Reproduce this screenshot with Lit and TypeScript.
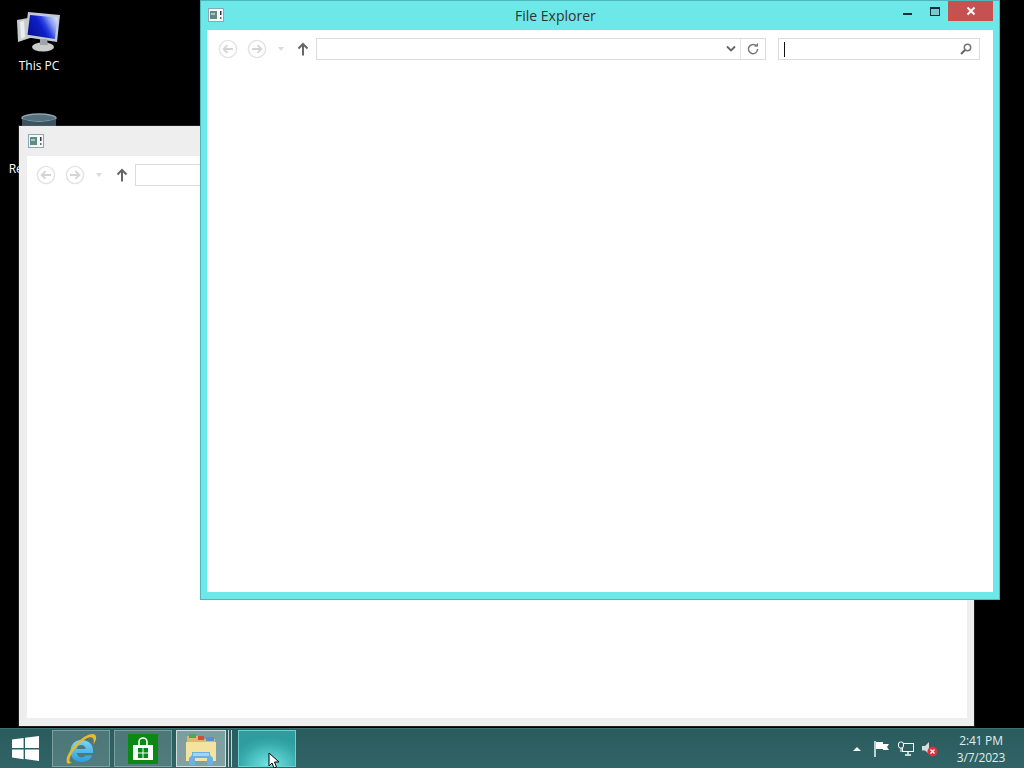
import { css, html, LitElement, svg } from "lit";
import { customElement, property } from "lit/decorators.js";

const windowIcon = html`<svg width="16" height="14" viewBox="0 0 16 14">
  <rect x="0.5" y="0.5" width="15" height="13" fill="#f4f8fa" stroke="#8fa5b5" />
  <rect x="2" y="3" width="7" height="8" fill="#5f8a80" />
  <rect x="3" y="5" width="4" height="2" fill="#a8c8c0" />
  <rect x="12" y="3" width="1.5" height="4" fill="#333" />
  <rect x="12" y="9" width="1.5" height="2" fill="#666" />
</svg>`;

const navCircle = (dir: "back" | "forward") => html`<svg width="20" height="20" viewBox="0 0 20 20">
  <circle cx="10" cy="10" r="8.6" fill="none" stroke="#e3e3e3" stroke-width="1.4" />
  ${dir === "back"
    ? svg`<path d="M15 10H6M9.5 6.2 5.6 10l3.9 3.8" fill="none" stroke="#d4d4d4" stroke-width="1.8" />`
    : svg`<path d="M5 10h9M10.5 6.2 14.4 10l-3.9 3.8" fill="none" stroke="#d4d4d4" stroke-width="1.8" />`}
</svg>`;

@customElement("file-window")
class FileWindow extends LitElement {
  @property() heading = "";
  @property({ type: Boolean }) active = false;

  static styles = css`
    :host {
      display: flex;
      flex-direction: column;
      position: absolute;
      box-sizing: border-box;
      padding: 0 7px 8px 7px;
      background: #eeeeee;
      box-shadow: 0 0 0 1px rgba(120, 120, 120, 0.25);
    }
    :host([active]) {
      background: #6ce8e8;
      box-shadow: inset 0 0 0 1px #4fb7bb;
    }
    :host(:not([active])) {
      padding-left: 8px;
    }
    :host(:not([active])) .toolbar {
      padding-left: 9px;
    }
    :host(:not([active])) .up {
      margin-left: 13px;
    }
    .titlebar {
      height: 30px;
      flex: none;
      position: relative;
      display: flex;
      align-items: center;
      padding-left: 1px;
    }
    .title {
      position: absolute;
      left: 308px;
      width: 82px;
      top: 6px;
      font: 14px/20px "Open Sans", sans-serif;
      color: #333;
      white-space: nowrap;
    }
    .controls {
      position: absolute;
      right: 0;
      top: 1px;
      display: flex;
      align-items: flex-start;
    }
    .ctl {
      width: 27px;
      height: 20px;
      display: flex;
      align-items: center;
      justify-content: center;
    }
    .close {
      width: 45px;
      height: 20px;
      background: #c75050;
      display: flex;
      align-items: center;
      justify-content: center;
    }
    .body {
      flex: 1;
      background: #fff;
    }
    .toolbar {
      display: flex;
      align-items: center;
      height: 22px;
      margin-top: 8px;
      padding-left: 11px;
    }
    .nav {
      display: flex;
      gap: 9px;
    }
    .drop {
      width: 0;
      height: 0;
      margin-left: 11px;
      border: 3.5px solid transparent;
      border-top: 4px solid #dcdcdc;
      border-bottom: 0;
    }
    .up {
      margin-left: 12px;
      width: 14px;
      height: 16px;
    }
    .address {
      margin-left: 6px;
      width: 450px;
      height: 22px;
      box-sizing: border-box;
      border: 1px solid #dcdcdc;
      display: flex;
      align-items: center;
      justify-content: flex-end;
      flex: none;
    }
    .chev {
      width: 10px;
      height: 8px;
      margin-right: 4px;
    }
    .refresh {
      width: 24px;
      height: 20px;
      border-left: 1px solid #e4e4e4;
      display: flex;
      align-items: center;
      justify-content: center;
    }
    .search {
      margin-left: 12px;
      width: 202px;
      height: 22px;
      box-sizing: border-box;
      border: 1px solid #dcdcdc;
      display: flex;
      align-items: center;
      justify-content: space-between;
      padding: 0 7px 0 5px;
      flex: none;
    }
    .caret {
      width: 1px;
      height: 15px;
      background: #111;
    }
  `;

  protected override render() {
    return html`
      <div class="titlebar">
        ${windowIcon}
        ${this.active
          ? html`<span class="title">${this.heading}</span>
              <div class="controls">
                <div class="ctl">
                  <svg width="10" height="10" viewBox="0 0 10 10"><rect y="7" width="9" height="2" fill="#10303a" /></svg>
                </div>
                <div class="ctl">
                  <svg width="10" height="9" viewBox="0 0 10 9">
                    <rect x="0.5" y="0.5" width="9" height="8" fill="#7cc8d0" stroke="#10303a" />
                    <rect width="10" height="2" fill="#10303a" />
                  </svg>
                </div>
                <div class="close">
                  <svg width="10" height="10" viewBox="0 0 10 10">
                    <path d="M1.5 1.5l7 7M8.5 1.5l-7 7" stroke="#fff" stroke-width="2" />
                  </svg>
                </div>
              </div>`
          : ""}
      </div>
      <div class="body">
        <div class="toolbar">
          <div class="nav">${navCircle("back")}${navCircle("forward")}</div>
          <div class="drop"></div>
          <svg class="up" viewBox="0 0 14 16">
            <path d="M7 14.5V3M2.5 7.5 7 3l4.5 4.5" fill="none" stroke="#666" stroke-width="2" />
          </svg>
          <div class="address">
            <svg class="chev" viewBox="0 0 10 8"><path d="M1 1.5l4 4 4-4" fill="none" stroke="#666" stroke-width="1.8" /></svg>
            <div class="refresh">
              <svg width="12" height="12" viewBox="0 0 12 12">
                <path d="M9.6 3.2A4.6 4.6 0 1 0 10.6 6" fill="none" stroke="#777" stroke-width="1.5" />
                <path d="M7 3.6h4V0z" fill="#777" />
              </svg>
            </div>
          </div>
          <div class="search">
            <div class="caret"></div>
            <svg width="12" height="12" viewBox="0 0 12 12">
              <circle cx="7.5" cy="4.5" r="3.2" fill="none" stroke="#777" stroke-width="1.5" />
              <path d="M5 7l-4 4" stroke="#666" stroke-width="2" />
            </svg>
          </div>
        </div>
      </div>
    `;
  }
}

const thisPcIcon = html`<svg width="46" height="46" viewBox="0 0 46 46">
  <defs>
    <linearGradient id="scr" x1="0" y1="0.7" x2="1" y2="0.25">
      <stop offset="0" stop-color="#0a0f90" />
      <stop offset="0.45" stop-color="#0d1fc8" />
      <stop offset="0.6" stop-color="#2a40e0" />
      <stop offset="0.8" stop-color="#8a9cf0" />
      <stop offset="1" stop-color="#d0daf8" />
    </linearGradient>
  </defs>
  <ellipse cx="27" cy="35" rx="11" ry="4.5" fill="#c9cdcc" />
  <path d="M1 8 12 6l5 19L2 30z" fill="#c8cccc" />
  <path d="M4 10l4-1 1 16-4 2z" fill="#eceeee" />
  <path d="M12 0 44 3l-3 27-32-5z" fill="#c2cad4" />
  <path d="M14 3 41.5 5.6 39 27 11.5 22.8z" fill="url(#scr)" />
  <path d="M24 27h7l1 6h-8z" fill="#a0a6a8" />
</svg>`;

const binIcon = html`<svg width="36" height="14" viewBox="0 0 36 14">
  <ellipse cx="18" cy="5" rx="17" ry="4" fill="#55707f" stroke="#8ea4ae" stroke-width="1.5" />
  <path d="M1 6q17 6 34 0v8H1z" fill="#3c5260" />
</svg>`;

const ieIcon = html`<svg width="34" height="34" viewBox="0 0 34 34">
  <defs>
    <linearGradient id="ieblue" x1="0" y1="0" x2="0" y2="1">
      <stop offset="0" stop-color="#7ed4f4" />
      <stop offset="1" stop-color="#2aa0e0" />
    </linearGradient>
  </defs>
  <path d="M17.500 8C11 8 6.500 12.500 6.500 19s4.500 11 11 11c5 0 9-2.300 10.500-6.500h-6.500c-.8 1.300-2.200 2-3.800 2-2.600 0-4.500-1.700-4.800-4.500H29C30 13 25 8 17.500 8zM12.600 17c.4-2.500 2.200-4 4.600-4s4.200 1.500 4.500 4z" fill="url(#ieblue)" fill-rule="evenodd" />
  <path d="M3 31C0 25 12 8 24 3c5-2 9-1 8 4-.3 1.500-1.200 3.500-2.500 5.500C30.500 7 29 4.500 25 5.500 16 8 6 22 5.500 28c-.1 1.500.6 2.500 2.500 2.500-2 1-4 1.800-5 .5z" fill="#e9b92e" />
</svg>`;

const storeIcon = html`<svg width="30" height="30" viewBox="0 0 30 30">
  <rect width="30" height="30" fill="#0a8a12" />
  <path d="M11 11V8a4 4 0 0 1 8 0v3" fill="none" stroke="#fff" stroke-width="1.6" />
  <path d="M5 11h20v15H5z" fill="#fff" />
  <path d="M10 14h4.500v4.500H10zM15.500 14H20v4.500h-4.500zM10 19.500h4.500V24H10zM15.500 19.500H20V24h-4.500z" fill="#0a8a12" />
</svg>`;

const folderIcon = html`<svg width="34" height="34" viewBox="0 0 34 34">
  <path d="M3 4h12l2 3h14v21H3z" fill="#dcbc6c" />
  <rect x="5" y="2" width="7" height="4" fill="#4fa85a" />
  <rect x="14" y="4" width="6" height="4" fill="#c8503c" />
  <rect x="22" y="5" width="8" height="4" fill="#5a90d0" />
  <path d="M2 10h30v19H2z" fill="#f4e2a0" />
  <path d="M5 33v-7l3-3V20h18v3l3 3v7h-6v-7H11v7z" fill="#6ab2e4" />
  <path d="M9 21h16v3H9z" fill="#a4d4f2" />
</svg>`;

@customElement("app-root")
export class AppRoot extends LitElement {
  static styles = css`
    :host {
      display: block;
      position: relative;
      width: 1024px;
      height: 768px;
      overflow: hidden;
      background: #000;
      font-family: "Open Sans", sans-serif;
    }
    .desk-icon {
      position: absolute;
      width: 76px;
      display: flex;
      flex-direction: column;
      align-items: center;
      color: #fff;
      font-size: 12px;
      line-height: 16px;
      white-space: nowrap;
    }
    .pc {
      left: 1px;
      top: 12px;
    }
    .bin {
      left: 1px;
      top: 113px;
      gap: 34px;
      letter-spacing: -0.2px;
    }
    .back-win {
      left: 19px;
      top: 126px;
      width: 955px;
      height: 600px;
    }
    .front-win {
      left: 200px;
      top: 0;
      width: 800px;
      height: 600px;
    }
    .taskbar {
      position: absolute;
      left: 0;
      right: 0;
      bottom: 0;
      height: 40px;
      box-sizing: border-box;
      background: linear-gradient(#2a5c5e, #316466);
      border-top: 1px solid #3d7072;
      display: flex;
      align-items: stretch;
    }
    .start {
      width: 50px;
      display: flex;
      align-items: center;
      justify-content: center;
      flex: none;
    }
    .apps {
      display: flex;
      gap: 4px;
      padding-top: 1px;
      padding-bottom: 1px;
      margin-left: 2px;
    }
    .app {
      width: 58px;
      box-sizing: border-box;
      background: rgba(255, 255, 255, 0.16);
      border: 1px solid rgba(255, 255, 255, 0.28);
      display: flex;
      align-items: center;
      justify-content: center;
    }
    .app.open {
      background: rgba(255, 255, 255, 0.4);
      border-color: rgba(255, 255, 255, 0.65);
      position: relative;
    }
    .stack {
      width: 50px;
      margin-right: 8px;
      box-shadow: 2px 0 0 #2d5f60, 3px 0 0 #c4d6d6, 5px 0 0 #2d5f60, 6px 0 0 #c4d6d6;
    }
    .running {
      background: radial-gradient(ellipse 70% 85% at 55% 100%, #74eaea, #38aaac 75%, #2f9c9e);
      border-color: #66d2d2;
    }
    .tray {
      margin-left: auto;
      display: flex;
      align-items: center;
      color: #dfeeee;
    }
    .tray-icons {
      display: flex;
      align-items: center;
      gap: 8px;
      margin-right: 10px;
    }
    .tri {
      width: 0;
      height: 0;
      margin-right: 13px;
      border: 4px solid transparent;
      border-bottom: 4px solid #f0f6f6;
      border-top: 0;
    }
    .clock {
      width: 66px;
      margin-right: 10px;
      text-align: center;
      font-size: 12px;
      line-height: 17px;
      letter-spacing: -0.2px;
    }
    .cursor {
      position: absolute;
      left: 268px;
      top: 752px;
    }
  `;

  protected override render() {
    return html`
      <div class="desk-icon pc">${thisPcIcon}<span>This PC</span></div>
      <div class="desk-icon bin">${binIcon}<span>Recycle Bin</span></div>
      <file-window class="back-win"></file-window>
      <file-window class="front-win" active heading="File Explorer"></file-window>
      <div class="taskbar">
        <div class="start">
          <svg width="27" height="25" viewBox="0 0 27 25">
            <path d="M0 3.600 11.600 2v10H0zM13 1.800 27 0v12H13zM0 13.400h11.600v9.800L0 21.600zM13 13.400h14V25l-14-2z" fill="#fff" />
          </svg>
        </div>
        <div class="apps">
          <div class="app">${ieIcon}</div>
          <div class="app">${storeIcon}</div>
          <div class="app open stack">${folderIcon}</div>
          <div class="app running"></div>
        </div>
        <div class="tray">
          <div class="tri"></div>
          <div class="tray-icons">
            <svg width="16" height="16" viewBox="0 0 16 16">
              <path d="M1 0v16" stroke="#fff" stroke-width="1.4" />
              <path d="M2 1h7v2h6l-2 3 2 3H9V8H2z" fill="#fff" />
            </svg>
            <svg width="16" height="16" viewBox="0 0 16 16">
              <rect x="4.500" y="2.500" width="11" height="8" fill="none" stroke="#fff" />
              <path d="M10 11v2M7 14h6" stroke="#fff" stroke-width="1.4" />
              <rect x="0.500" y="1" width="5" height="6" rx="2" fill="#2d5f60" stroke="#fff" />
              <path d="M3 7v4" stroke="#fff" />
            </svg>
            <svg width="16" height="16" viewBox="0 0 16 16">
              <path d="M0 5h3l4-4v12L3 9.500H0z" fill="#d8dcdc" />
              <circle cx="10.500" cy="10.500" r="5" fill="#d9333f" />
              <path d="M8.500 8.500l4 4M12.500 8.500l-4 4" stroke="#fff" stroke-width="1.4" />
            </svg>
          </div>
          <div class="clock">2:41 PM<br />3/7/2023</div>
        </div>
      </div>
      <svg class="cursor" width="13" height="17" viewBox="0 0 13 17">
        <path d="M1 1v13l3-3 2 5 2.500-1-2-5H11z" fill="#fff" stroke="#000" />
      </svg>
    `;
  }
}

export { FileWindow };
